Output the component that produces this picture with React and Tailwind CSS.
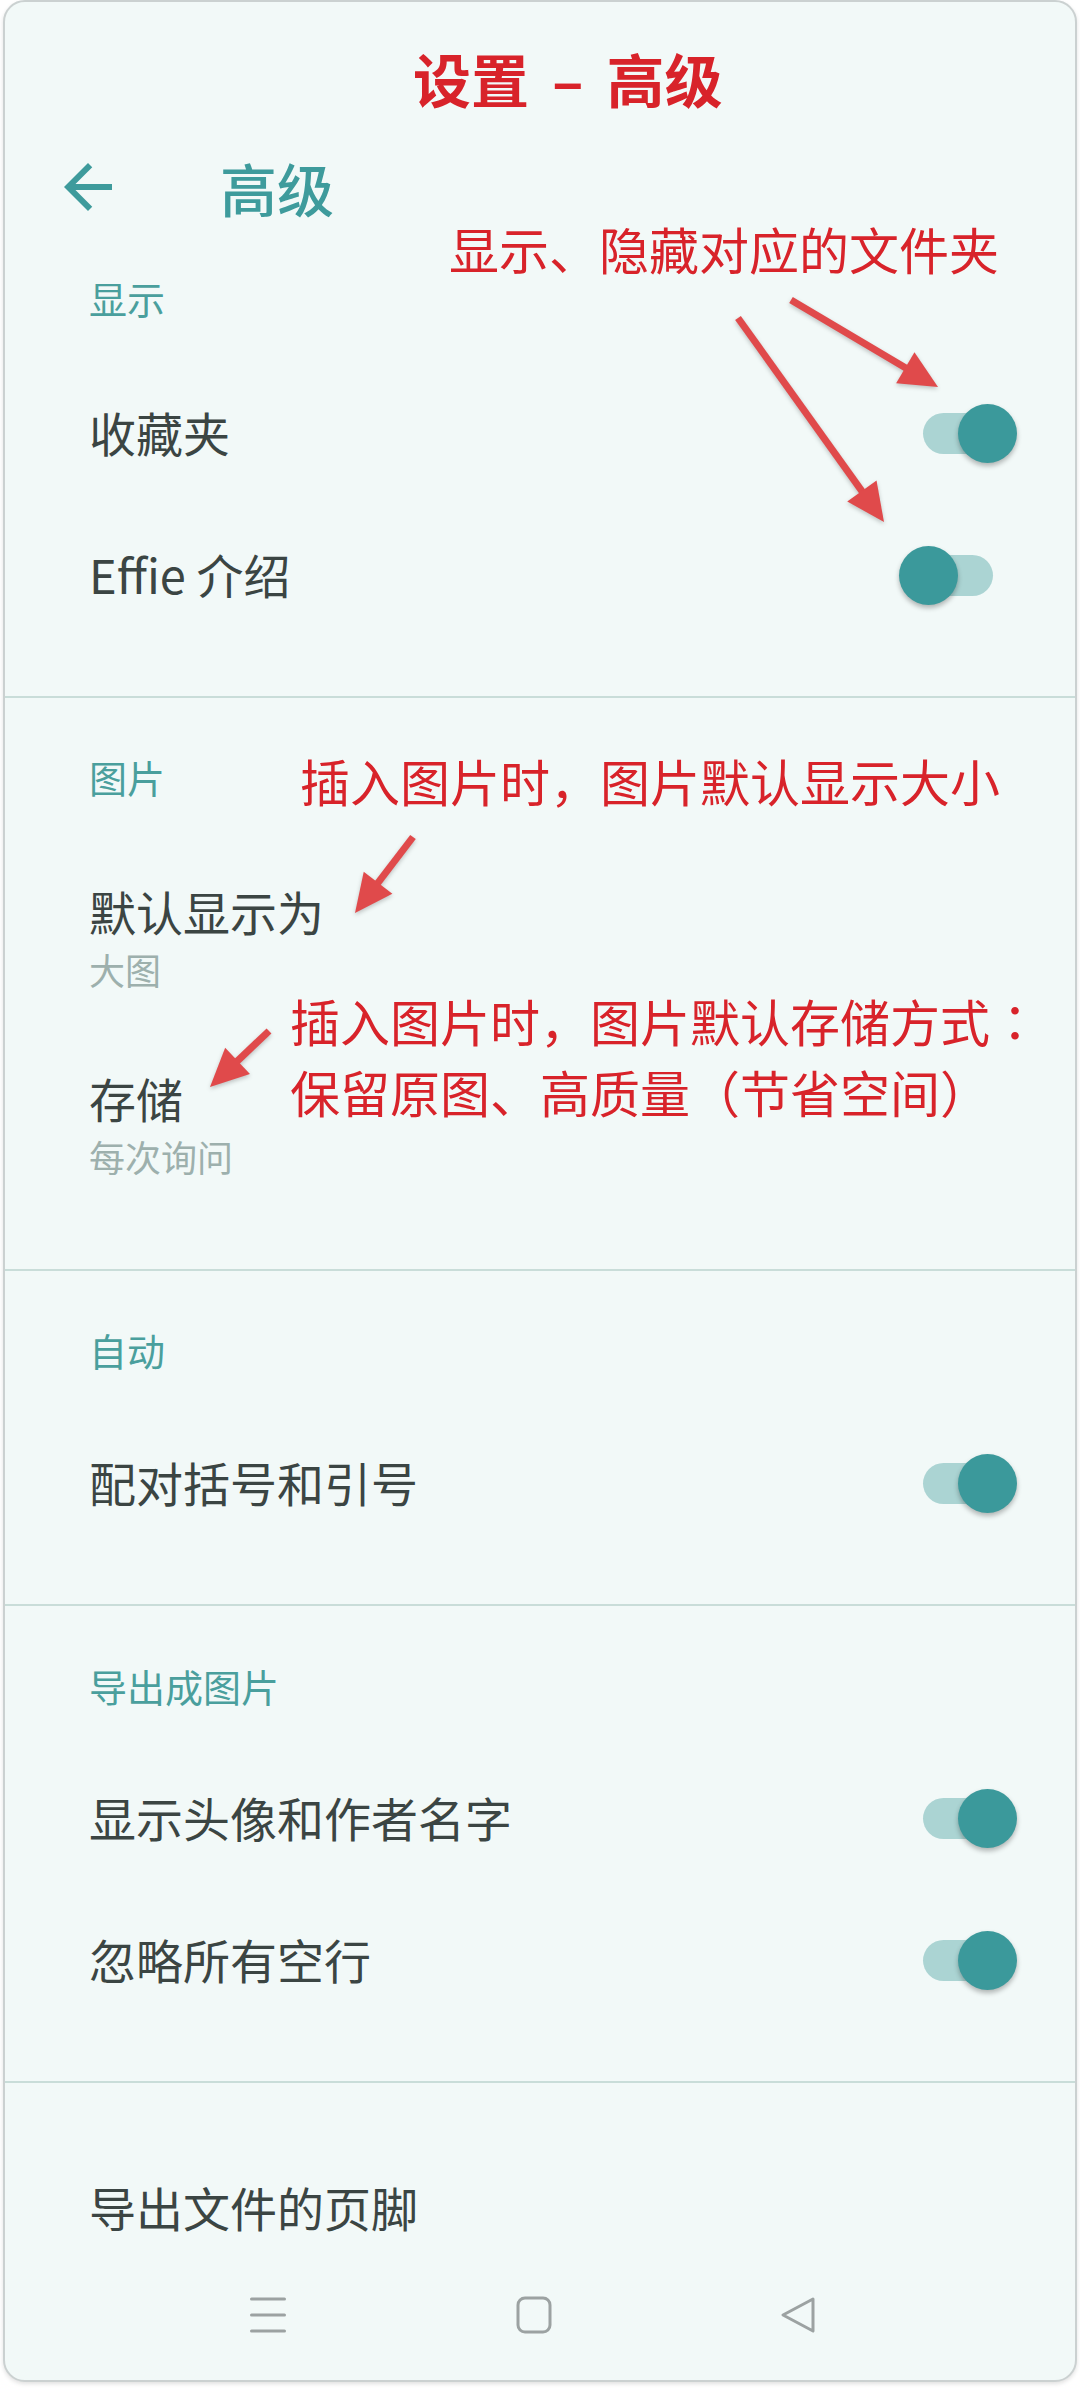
import React from 'react'

const font = "font-['Noto_Sans_CJK_SC','Noto_Sans',sans-serif]"

// red pointer line with a triangular head, coordinates in page pixels
const Pointer = ({ x1, y1, x2, y2 }) => {
  const len = Math.hypot(x2 - x1, y2 - y1)
  const ux = (x2 - x1) / len
  const uy = (y2 - y1) / len
  const head = 38
  const half = 18
  const bx = x2 - ux * head
  const by = y2 - uy * head
  const pts = [
    [x2, y2],
    [bx - uy * half, by + ux * half],
    [bx + uy * half, by - ux * half],
  ]
  return (
    <g>
      <line x1={x1} y1={y1} x2={bx + ux * 4} y2={by + uy * 4} stroke="#e04a4b" strokeWidth="7" />
      <polygon points={pts.map((p) => p.join(',')).join(' ')} fill="#e04a4b" />
    </g>
  )
}

const Toggle = ({ on }) => (
  <div className="relative w-[118px] h-[59px] shrink-0">
    <div className="absolute left-[24px] top-[9px] w-[70px] h-[41px] rounded-full bg-[#abd4d3]" />
    <div
      className={`absolute top-0 w-[59px] h-[59px] rounded-full bg-[#3b999b] shadow-[0_3px_5px_rgba(0,0,0,0.28)] ${
        on ? 'left-[59px]' : 'left-0'
      }`}
    />
  </div>
)

const Header = ({ children, className = 'pt-[56px]' }) => (
  <div className={`h-[141px] pl-[84px] ${className}`}>
    <div className="text-[38px] leading-[48px] text-[#4a9f9d]">{children}</div>
  </div>
)

const SwitchRow = ({ label, on }) => (
  <div className="h-[142px] flex items-center justify-between pl-[84px] pr-[58px]">
    <span className="pb-[4px] text-[47px] leading-none text-[#3b4543]">{label}</span>
    <Toggle on={on} />
  </div>
)

const ValueRow = ({ label, value }) => (
  <div className="h-[187px] pl-[84px] pt-[44px] flex flex-col">
    <span className="text-[47px] leading-[56px] text-[#3b4543]">{label}</span>
    <span className="mt-[8px] text-[36px] leading-[44px] text-[#9db0ad]">{value}</span>
  </div>
)

const Divider = () => <div className="h-[2px] bg-[#c9ddd9]" />

const App = () => {
  return (
    <div className={`min-h-screen bg-white px-[3px] ${font}`}>
      <div className="relative h-[2382px] rounded-[22px] border-2 border-[#cbd1d1] bg-[#f2f9f8] shadow-[0_2px_4px_rgba(0,0,0,0.12)] overflow-hidden">
        {/* page caption */}
        <div className="h-[151px] flex items-center pl-[408px] text-[58px] font-bold leading-none text-[#d8232a]">
          <span>设置</span>
          <span className="mx-[23px]">–</span>
          <span>高级</span>
        </div>

        {/* toolbar */}
        <div className="h-[68px] flex items-center pl-[59px]">
          <svg width="48" height="48" viewBox="4 4 16 16" fill="#3e9b9c">
            <path d="M20 11H7.83l5.59-5.59L12 4l-8 8 8 8 1.41-1.41L7.83 13H20v-2z" />
          </svg>
          <span className="ml-[108px] text-[57px] font-medium leading-none text-[#3e9b9c]">高级</span>
        </div>

        <Header className="pt-[53px]">显示</Header>
        <SwitchRow label="收藏夹" on />
        <SwitchRow label="Effie 介绍" on={false} />
        <div className="h-[50px]" />
        <Divider />

        <Header className="pt-[55px]">图片</Header>
        <ValueRow label="默认显示为" value="大图" />
        <ValueRow label="存储" value="每次询问" />
        <div className="h-[56px]" />
        <Divider />

        <Header className="pt-[55px]">自动</Header>
        <SwitchRow label="配对括号和引号" on />
        <div className="h-[50px]" />
        <Divider />

        <Header className="pt-[56px]">导出成图片</Header>
        <SwitchRow label="显示头像和作者名字" on />
        <SwitchRow label="忽略所有空行" on />
        <div className="h-[50px]" />
        <Divider />

        <div className="pt-[100px] pl-[84px]">
          <span className="block text-[47px] leading-[48px] text-[#3b4543]">导出文件的页脚</span>
        </div>

        {/* system navigation bar */}
        <div className="mt-[36px] h-[96px] flex items-center pl-[245px]">
          <svg width="36" height="36" viewBox="0 0 36 36" stroke="#9ca2a2" strokeWidth="3" strokeLinecap="round">
            <line x1="1.5" y1="2" x2="34.5" y2="2" />
            <line x1="1.5" y1="18" x2="34.5" y2="18" />
            <line x1="1.5" y1="34" x2="34.5" y2="34" />
          </svg>
          <svg className="ml-[230px]" width="36" height="38" viewBox="0 0 36 38" fill="none" stroke="#9ca2a2" strokeWidth="3">
            <rect x="2" y="2" width="32" height="34" rx="7" />
          </svg>
          <svg className="ml-[226px]" width="40" height="38" viewBox="0 0 40 38" fill="none" stroke="#9ca2a2" strokeWidth="3" strokeLinejoin="round">
            <path d="M35 3 L5 19 L35 35 Z" />
          </svg>
        </div>

        {/* annotations */}
        <div className="absolute left-[444px] top-[221px] text-[50px] leading-[50px] text-[#d8232a] whitespace-nowrap">
          显示、隐藏对应的文件夹
        </div>
        <div className="absolute left-[295px] top-[753px] text-[50px] leading-[50px] text-[#d8232a] whitespace-nowrap">
          插入图片时，图片默认显示大小
        </div>
        <div className="absolute left-[285px] top-[983px] text-[50px] leading-[71px] text-[#d8232a] whitespace-nowrap">
          <div>
            插入图片时，图片默认存储方式
            <span className="font-['Noto_Sans_CJK_TC',sans-serif]">：</span>
          </div>
          <div>保留原图、高质量（节省空间）</div>
        </div>
        <svg
          className="absolute left-0 top-0 pointer-events-none drop-shadow-[0_2px_2px_rgba(0,0,0,0.22)]"
          width="1070"
          height="2378"
          viewBox="5 2 1070 2378"
        >
          <Pointer x1={791} y1={300} x2={938} y2={387} />
          <Pointer x1={738} y1={318} x2={884} y2={522} />
          <Pointer x1={413} y1={837} x2={355} y2={913} />
          <Pointer x1={269} y1={1031} x2={210} y2={1087} />
        </svg>
      </div>
    </div>
  )
}

export default App
